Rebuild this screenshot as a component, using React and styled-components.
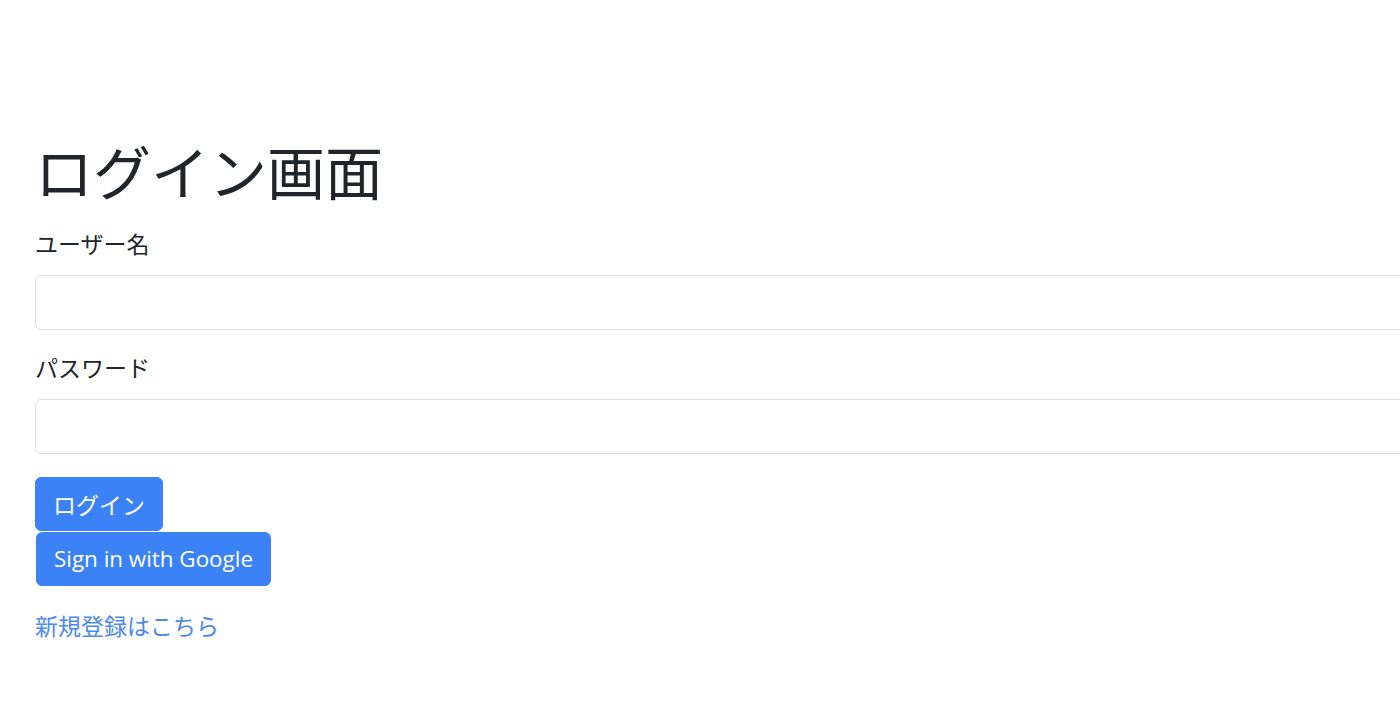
import React from "react";
import styled, { createGlobalStyle } from "styled-components";

const Global = createGlobalStyle`
  html, body { margin: 0; padding: 0; background: #fff; }
  body {
    font-family: "Open Sans", "Noto Sans CJK JP", sans-serif;
    color: #212529;
    overflow: hidden;
  }
  * { box-sizing: border-box; }
`;

const Page = styled.div`
  width: 1400px;
  height: 701px;
  overflow: hidden;
`;

const Container = styled.main`
  width: 1460px;
  padding: 136px 0 0 35px;
  display: flex;
  flex-direction: column;
  align-items: flex-start;
`;

const Title = styled.h1`
  margin: 0 0 20px;
  font-family: "Noto Sans CJK JP", sans-serif;
  font-weight: 400;
  font-size: 58px;
  line-height: 1.2;
  letter-spacing: 0;
`;

const Field = styled.div`
  width: 100%;
  margin-bottom: ${(p) => p.$mb}px;
`;

const Label = styled.label`
  display: block;
  font-family: "Noto Sans CJK JP", sans-serif;
  font-size: 23px;
  line-height: 34px;
  margin-bottom: 15px;
`;

const Input = styled.input`
  display: block;
  width: 100%;
  height: 55px;
  border: 1px solid #dadde1;
  border-radius: 6px;
  background: #fff;
  padding: 0 17px;
  font-size: 23px;
  outline: none;
`;

const Button = styled.button`
  display: inline-flex;
  align-items: center;
  height: 54px;
  padding: 0 17px;
  margin-left: ${(p) => p.$ml || 0}px;
  margin-bottom: ${(p) => p.$mb || 0}px;
  background: #3b82f6;
  color: #fff;
  border: 1px solid #3b82f6;
  border-radius: 6px;
  font-family: ${(p) => (p.$latin ? '"Open Sans", sans-serif' : '"Noto Sans CJK JP", sans-serif')};
  font-size: ${(p) => (p.$latin ? 22.4 : 23)}px;
  cursor: pointer;
`;

const LinkText = styled.a`
  margin-top: 22px;
  font-family: "Noto Sans CJK JP", sans-serif;
  font-size: 23px;
  line-height: 34px;
  color: #4d88f0;
  text-decoration: none;
`;

export default function App() {
  return (
    <Page>
      <Global />
      <Container>
        <Title>ログイン画面</Title>
        <Field $mb={20}>
          <Label htmlFor="user">ユーザー名</Label>
          <Input id="user" type="text" />
        </Field>
        <Field $mb={23}>
          <Label htmlFor="pass">パスワード</Label>
          <Input id="pass" type="password" />
        </Field>
        <Button $mb={1}>ログイン</Button>
        <Button $latin $ml={1}>Sign in with Google</Button>
        <LinkText href="#">新規登録はこちら</LinkText>
      </Container>
    </Page>
  );
}
